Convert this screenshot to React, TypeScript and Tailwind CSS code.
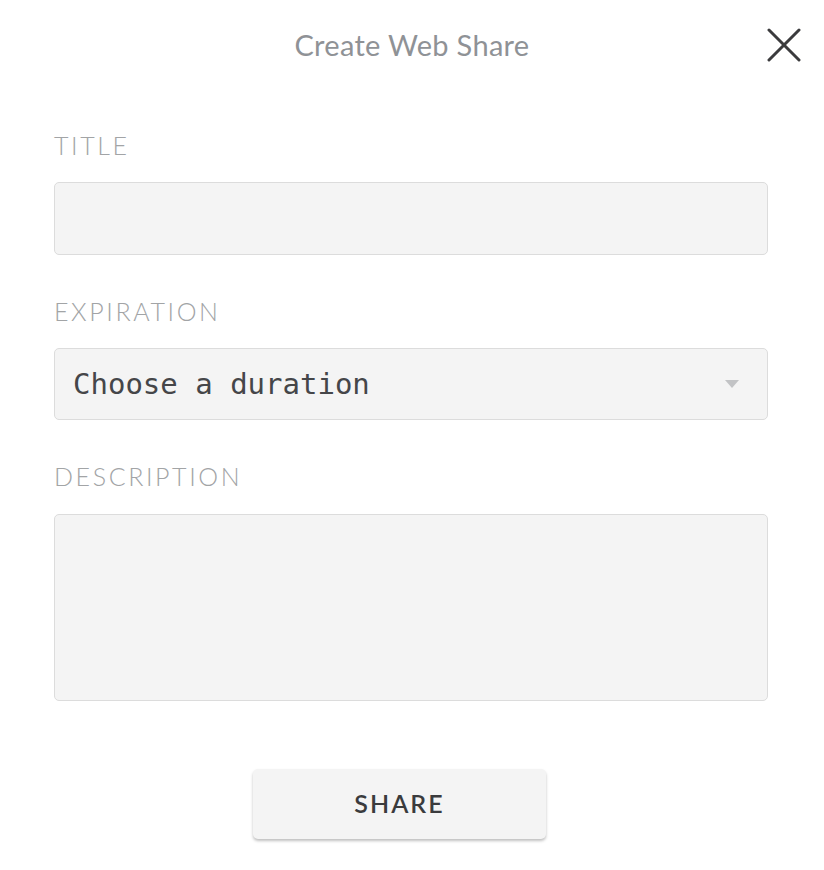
import React from "react";

const labelCls =
  "block h-[25px] text-[25px] leading-[25px] tracking-[2.6px] text-[#a2a4a6] font-light";

export default function App() {
  return (
    <div
      className="w-[824px] h-[870px] bg-white flex flex-col"
      style={{ fontFamily: "Lato, 'Open Sans', sans-serif" }}
    >
      <div className="relative h-[88px] flex items-center justify-center shrink-0">
        <h1 className="text-[29px] leading-none tracking-[0.3px] text-[#8f9296] font-normal">Create Web Share</h1>
        <button className="absolute right-[22px] top-[27px] w-[36px] h-[36px] flex items-center justify-center" aria-label="Close">
          <svg width="34" height="34" viewBox="0 0 34 34" fill="none" stroke="#3b3b3d" strokeWidth="3" strokeLinecap="round">
            <line x1="2" y1="2" x2="32" y2="32" />
            <line x1="32" y1="2" x2="2" y2="32" />
          </svg>
        </button>
      </div>

      <div className="flex flex-col pl-[54px] pr-[56px] pt-[45px]">
        <label className={labelCls}>TITLE</label>
        <input
          className="mt-[24px] h-[73px] w-full rounded-[5px] border border-[#dcdcdc] bg-[#f4f4f4] outline-none"
          type="text"
        />

        <label className={labelCls + " mt-[44px]"}>EXPIRATION</label>
        <div className="mt-[24px] h-[72px] w-full rounded-[5px] border border-[#dcdcdc] bg-[#f4f4f4] flex items-center justify-between pl-[18px] pr-[27px]">
          <span
            className="text-[29px] leading-none text-[#454649]"
            style={{ fontFamily: "'DejaVu Sans Mono', monospace" }}
          >
            Choose a duration
          </span>
          <svg width="16" height="10" viewBox="0 0 16 10">
            <polygon points="1,1 15,1 8,9" fill="#c2c3c5" />
          </svg>
        </div>

        <label className={labelCls + " mt-[44px]"}>DESCRIPTION</label>
        <textarea className="mt-[25px] h-[187px] w-full rounded-[5px] border border-[#dcdcdc] bg-[#f4f4f4] outline-none resize-none" />

        <div className="flex mt-[68px] pl-[199px]">
          <button className="w-[293px] h-[70px] rounded-[5px] bg-[#f4f4f4] shadow-[0_2px_3px_rgba(0,0,0,0.25)] text-[25px] font-semibold tracking-[2px] text-[#3a3b3d]">
            SHARE
          </button>
        </div>
      </div>
    </div>
  );
}
